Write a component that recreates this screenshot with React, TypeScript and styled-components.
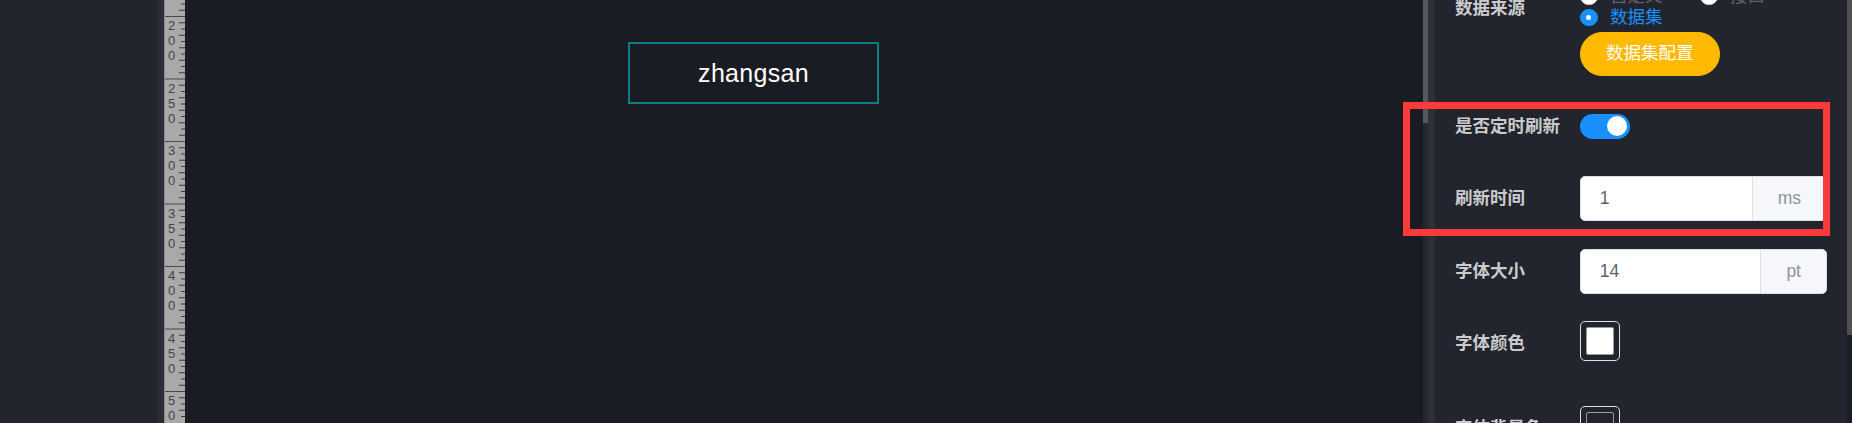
import React from "react";
import styled, { createGlobalStyle } from "styled-components";

const GlobalStyle = createGlobalStyle`
  html, body { margin: 0; padding: 0; background: #1a1c23; overflow: hidden; }
  *, *::before, *::after { box-sizing: border-box; }
`;

const FONT = `"Liberation Sans", "Noto Sans CJK SC", sans-serif`;

const Page = styled.div`
  position: relative;
  display: flex;
  width: 1852px;
  height: 423px;
  overflow: hidden;
  font-family: ${FONT};
`;

const SideBar = styled.aside`
  flex: none;
  width: 164px;
  height: 100%;
  background: #22252c;
  border-right: 7px solid #2b2d35;
`;

const RulerColumn = styled.div`
  flex: none;
  width: 21px;
  height: 100%;
  background: #a9a9a9;
  border-left: 1px solid #8c8c8c;
  overflow: hidden;
  svg { display: block; }
`;

const Canvas = styled.main`
  position: relative;
  flex: 1;
  height: 100%;
  background: #1a1c23;
`;

const TextNode = styled.div<{ $x: number; $y: number; $w: number; $h: number }>`
  position: absolute;
  left: ${(p) => p.$x}px;
  top: ${(p) => p.$y}px;
  width: ${(p) => p.$w}px;
  height: ${(p) => p.$h}px;
  border: 2px solid #0f7c81;
  display: flex;
  align-items: center;
  justify-content: center;
  color: #ffffff;
  font-family: "Liberation Sans", Arial, sans-serif;
  font-size: 25px;
  letter-spacing: 0.3px;
`;

const ScrollTrack = styled.div<{ $bg: string }>`
  flex: none;
  width: 5px;
  height: 100%;
  background: ${(p) => p.$bg};
  display: flex;
  flex-direction: column;
`;

const ScrollThumb = styled.div<{ $h: number; $bg: string }>`
  height: ${(p) => p.$h}px;
  background: ${(p) => p.$bg};
`;

const Panel = styled.aside`
  flex: none;
  width: 419px;
  height: 100%;
  background: #22252d;
  border-left: 7px solid #2e2f37;
  padding: 0 20px;
  overflow: hidden;
`;

const Form = styled.div`
  margin-top: -14px;
  display: flex;
  flex-direction: column;
`;

const FormItem = styled.div<{ $gap?: number }>`
  display: flex;
  align-items: flex-start;
  margin-bottom: ${(p) => (p.$gap ?? 27.5)}px;
`;

const Label = styled.label`
  flex: none;
  width: 125px;
  line-height: 45px;
  font-size: 17.5px;
  font-weight: bold;
  color: #cbcbcb;
  white-space: nowrap;
`;

const Control = styled.div<{ $center?: boolean }>`
  flex: 1;
  min-width: 0;
  min-height: 45px;
  display: flex;
  flex-direction: column;
  align-items: flex-start;
  justify-content: ${(p) => (p.$center ? "center" : "flex-start")};
`;

const RadioGroup = styled.div`
  display: flex;
  flex-wrap: wrap;
  width: 100%;
`;

const Radio = styled.span`
  display: inline-flex;
  align-items: center;
  height: 21px;
  margin-right: 37.5px;
  gap: 12.5px;
`;

const RadioDot = styled.span<{ $checked?: boolean }>`
  position: relative;
  width: 17.5px;
  height: 17.5px;
  border-radius: 50%;
  border: 1px solid ${(p) => (p.$checked ? "#1890ff" : "#dcdfe6")};
  background: ${(p) => (p.$checked ? "#1890ff" : "#ffffff")};
  &::after {
    content: "";
    display: ${(p) => (p.$checked ? "block" : "none")};
    position: absolute;
    left: 50%;
    top: 50%;
    width: 5px;
    height: 5px;
    margin: -2.5px 0 0 -2.5px;
    border-radius: 50%;
    background: #fff;
  }
`;

const RadioText = styled.span<{ $checked?: boolean }>`
  font-size: 17.5px;
  line-height: 1;
  color: ${(p) => (p.$checked ? "#1890ff" : "#606266")};
`;

const RoundButton = styled.button`
  margin-top: 3.5px;
  height: 44.5px;
  padding: 0 25px;
  border: 1px solid #ffba00;
  border-radius: 22px;
  background: #ffba00;
  color: #ffffff;
  font-family: ${FONT};
  font-size: 17.5px;
  line-height: 1;
`;

const Switch = styled.span<{ $on?: boolean }>`
  display: flex;
  align-items: center;
  justify-content: ${(p) => (p.$on ? "flex-end" : "flex-start")};
  width: 50px;
  height: 25px;
  padding: 0 3px;
  border-radius: 12.5px;
  background: ${(p) => (p.$on ? "#1890ff" : "#dcdfe6")};
`;

const Knob = styled.span`
  width: 20px;
  height: 20px;
  border-radius: 50%;
  background: #ffffff;
`;

const InputGroup = styled.div`
  display: flex;
  width: 100%;
  height: 45px;
  border: 1px solid #dcdfe6;
  border-radius: 5px;
  background: #ffffff;
  overflow: hidden;
`;

const InputValue = styled.span`
  flex: 1;
  padding-left: 18.75px;
  line-height: 43px;
  font-size: 17.5px;
  color: #606266;
`;

const Append = styled.span`
  flex: none;
  padding: 0 25px;
  line-height: 43px;
  font-size: 17.5px;
  color: #909399;
  background: #f5f7fa;
  border-left: 1px solid #dcdfe6;
`;

const ColorPicker = styled.span`
  display: flex;
  width: 40px;
  height: 40px;
  padding: 5px;
  border: 1px solid #e0e0e0;
  border-radius: 5px;
`;

const ColorSwatch = styled.span<{ $color?: string }>`
  flex: 1;
  display: flex;
  align-items: center;
  justify-content: center;
  border: 1px solid #999999;
  border-radius: 2px;
  background: ${(p) => p.$color ?? "transparent"};
  color: #999999;
  font-size: 15px;
  line-height: 1;
`;

const Annotation = styled.div`
  position: absolute;
  left: 1403px;
  top: 102px;
  width: 427px;
  height: 134px;
  border: 7px solid #fd3a3a;
  pointer-events: none;
`;

function Ruler() {
  const items: React.ReactNode[] = [];
  const yOf = (u: number) => 16 + (u - 200) * 1.25;
  for (let u = 185; u <= 520; u += 5) {
    const y = yOf(u);
    if (u % 50 === 0) {
      items.push(<line key={"l" + u} x1={0} x2={21} y1={y + 0.5} y2={y + 0.5} stroke="#4a4a4a" strokeWidth={1} />);
      String(u)
        .split("")
        .forEach((d, i) => {
          items.push(
            <text key={"t" + u + "-" + i} x={3} y={y + 14 + i * 15} fontSize={13} fill="#454545" fontFamily="Liberation Sans, Arial, sans-serif">
              {d}
            </text>
          );
        });
    } else {
      const len = u % 10 === 0 ? 4 : 6;
      items.push(<line key={"k" + u} x1={20 - len} x2={20} y1={y + 0.5} y2={y + 0.5} stroke="#3a3a3a" strokeWidth={1} />);
    }
  }
  return (
    <svg width={20} height={423} viewBox="0 0 20 423">
      {items}
    </svg>
  );
}

export default function App() {
  return (
    <>
      <GlobalStyle />
      <Page>
        <SideBar />
        <RulerColumn>
          <Ruler />
        </RulerColumn>
        <Canvas>
          <TextNode $x={443} $y={42} $w={251} $h={62}>
            zhangsan
          </TextNode>
        </Canvas>
        <ScrollTrack $bg="#27282f">
          <ScrollThumb $h={123} $bg="#58585c" />
        </ScrollTrack>
        <Panel>
          <Form>
            <FormItem>
              <Label>数据来源</Label>
              <Control>
                <RadioGroup>
                  <Radio>
                    <RadioDot />
                    <RadioText>自定义</RadioText>
                  </Radio>
                  <Radio>
                    <RadioDot />
                    <RadioText>接口</RadioText>
                  </Radio>
                  <Radio>
                    <RadioDot $checked />
                    <RadioText $checked>数据集</RadioText>
                  </Radio>
                </RadioGroup>
                <RoundButton>数据集配置</RoundButton>
              </Control>
            </FormItem>
            <FormItem>
              <Label>是否定时刷新</Label>
              <Control $center>
                <Switch $on>
                  <Knob />
                </Switch>
              </Control>
            </FormItem>
            <FormItem>
              <Label>刷新时间</Label>
              <Control>
                <InputGroup>
                  <InputValue>1</InputValue>
                  <Append>ms</Append>
                </InputGroup>
              </Control>
            </FormItem>
            <FormItem>
              <Label>字体大小</Label>
              <Control>
                <InputGroup>
                  <InputValue>14</InputValue>
                  <Append>pt</Append>
                </InputGroup>
              </Control>
            </FormItem>
            <FormItem $gap={39.5}>
              <Label>字体颜色</Label>
              <Control>
                <ColorPicker>
                  <ColorSwatch $color="#ffffff" />
                </ColorPicker>
              </Control>
            </FormItem>
            <FormItem>
              <Label>字体背景色</Label>
              <Control>
                <ColorPicker>
                  <ColorSwatch>×</ColorSwatch>
                </ColorPicker>
              </Control>
            </FormItem>
          </Form>
        </Panel>
        <ScrollTrack $bg="#1d1e24">
          <ScrollThumb $h={335} $bg="#4f4f54" />
        </ScrollTrack>
        <Annotation />
      </Page>
    </>
  );
}
